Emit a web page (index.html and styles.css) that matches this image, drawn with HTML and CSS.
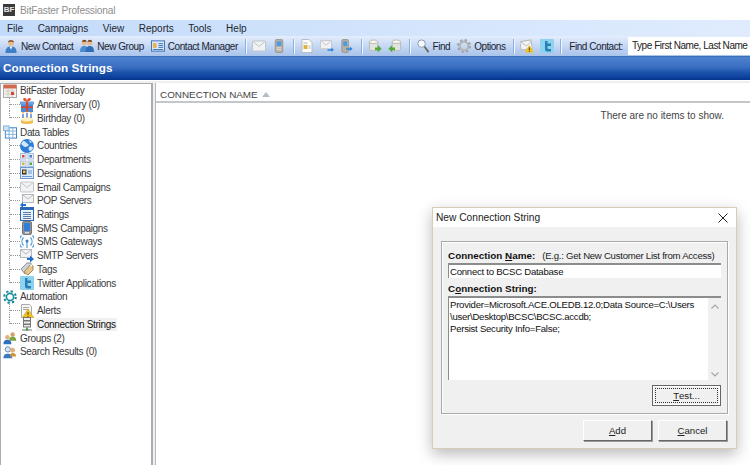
FILE: index.html
```html
<!DOCTYPE html>
<html lang="en">
<head>
<meta charset="utf-8">
<title>BitFaster Professional</title>
<link rel="stylesheet" href="styles.css">
</head>
<body>
<svg class="defs" width="0" height="0" aria-hidden="true">
  <symbol id="i-person" viewBox="0 0 14 15"><circle cx="7" cy="4" r="3.2" fill="#e9b98d"/><path d="M3.800 3.500C4 .6 10 .6 10.200 3.500 8.500 2.500 5.500 2.500 3.800 3.500z" fill="#5b3a22"/><path d="M1 15c0-5 2-7 6-7s6 2 6 7z" fill="#3f7fc6"/><path d="M5.500 8h3L7 11.500z" fill="#fff"/></symbol>
  <symbol id="i-group" viewBox="0 0 15 15"><circle cx="4.500" cy="4" r="2.800" fill="#e9b98d"/><circle cx="10.500" cy="4" r="2.800" fill="#e9b98d"/><path d="M2 3c.5-3 5-3 5 0zM8 3c.5-3 5-3 5 0z" fill="#6b4526"/><path d="M0 14c0-5 2-6.500 4.500-6.500S9 9 9 14z" fill="#4d8bd0"/><path d="M6 14c0-5 2-6.500 4.500-6.500S15 9 15 14z" fill="#2f6db5"/></symbol>
  <symbol id="i-manager" viewBox="0 0 15 14"><rect x=".5" y="1.500" width="14" height="11" fill="#d9e8fa" stroke="#3a6eb0"/><rect x="2" y="4" width="4" height="5" fill="#e8b04c"/><path d="M8 4.500h5M8 6.500h5M8 8.500h5M2 10.800h11" stroke="#3a6eb0"/></symbol>
  <symbol id="i-mail" viewBox="0 0 14 11"><rect x=".5" y=".5" width="13" height="10" rx="1" fill="#f1f2f3" stroke="#c2c5c8"/><path d="M1 1l6 5 6-5" fill="none" stroke="#c2c5c8"/></symbol>
  <symbol id="i-phone" viewBox="0 0 9 15"><rect x=".5" y=".5" width="8" height="14" rx="1.500" fill="#b4b0a6" stroke="#9a968c"/><rect x="2" y="2.500" width="5" height="5" fill="#4d9be0"/><path d="M2 9.500h5M2 11.500h5" stroke="#e4e2dc"/></symbol>
  <symbol id="i-doc" viewBox="0 0 11 14"><path d="M.5.500h7l3 3v10H.500z" fill="#fdfdf8" stroke="#b9bcc0"/><rect x="2" y="6" width="4" height="4" fill="#e3b23c"/><path d="M7 7h2M7 9h2M2 4h4" stroke="#9fb6d0"/></symbol>
  <symbol id="i-mailgo" viewBox="0 0 15 13"><rect x=".5" y=".5" width="12" height="9" rx="1" fill="#f1f2f3" stroke="#c2c5c8"/><path d="M1 1l5.500 4.500L12 1" fill="none" stroke="#c2c5c8"/><path d="M8 10h4V8l3 2.500-3 2.500v-1.500H8z" fill="#2f86d8"/></symbol>
  <symbol id="i-phonego" viewBox="0 0 12 15"><rect x=".5" y=".5" width="7" height="14" rx="1.500" fill="#b4b0a6" stroke="#9a968c"/><rect x="2" y="2.500" width="4" height="5" fill="#4d9be0"/><path d="M5 10h4V8l3 2.500-3 2.500v-1.500H5z" fill="#2f86d8"/></symbol>
  <symbol id="i-dbout" viewBox="0 0 14 15"><path d="M1 3v8c0 2 9 2 9 0V3z" fill="#e4e4de" stroke="#b8b8b2"/><ellipse cx="5.500" cy="3" rx="4.500" ry="2" fill="#f6f6f2" stroke="#b8b8b2"/><path d="M7 9h3V6.500l4 4-4 4V12H7z" fill="#55a83a"/></symbol>
  <symbol id="i-dbin" viewBox="0 0 14 15"><path d="M4 3v8c0 2 9 2 9 0V3z" fill="#e4e4de" stroke="#b8b8b2"/><ellipse cx="8.500" cy="3" rx="4.500" ry="2" fill="#f6f6f2" stroke="#b8b8b2"/><path d="M7 9H4V6.500l-4 4 4 4V12h3z" fill="#55a83a"/></symbol>
  <symbol id="i-find" viewBox="0 0 13 15"><circle cx="5" cy="5" r="4" fill="#f5f8fc" stroke="#8d98a5"/><path d="M8 8l4.500 6" stroke="#6d6a66" stroke-width="2"/></symbol>
  <symbol id="i-gear" viewBox="0 0 15 15"><circle cx="7.500" cy="7.500" r="4.600" fill="none" stroke="#b4b7ba" stroke-width="2.400"/><circle cx="7.500" cy="7.500" r="6.500" fill="none" stroke="#a0a3a7" stroke-width="2" stroke-dasharray="2.600 2.500"/></symbol>
  <symbol id="i-mailwarn" viewBox="0 0 15 14"><rect x=".5" y="1.500" width="12" height="9" fill="#f4f5f3" stroke="#b5b9bd" transform="rotate(-10 6 6)"/><path d="M1 3l6 4 5-5" fill="none" stroke="#b5b9bd"/><path d="M10 6l5 8H5z" fill="#f2c21a"/><path d="M10 8.500v3M10 12.200v1" stroke="#333"/></symbol>
  <symbol id="i-twitter" viewBox="0 0 14 14"><rect width="14" height="14" rx="1" fill="#8ed3ee"/><path d="M5 2h2.500v2.500H11v2.500H7.500v2c0 1 1 1 3.500 1V12.500H7C5.500 12.500 5 11.500 5 10z" fill="#2b7fb8"/></symbol>
  <symbol id="i-today" viewBox="0 0 14 14"><rect x=".5" y="1.500" width="13" height="12" fill="#f4f1ee" stroke="#aaa"/><rect x=".5" y=".5" width="13" height="4" fill="#cf6a50"/><path d="M2 7h10M2 10h10M5 5v8M9 5v8" stroke="#cfc8c2"/><rect x="8" y="8" width="3" height="3" fill="#d24a2a"/></symbol>
  <symbol id="i-gift" viewBox="0 0 14 14"><rect x="1" y="5" width="12" height="9" fill="#4c8ad2"/><rect x="0" y="3.500" width="14" height="3" fill="#6fa3e0"/><rect x="6" y="3.500" width="2" height="10.500" fill="#d8452a"/><rect x="1" y="8.500" width="12" height="1.500" fill="#d8452a"/><path d="M7 3.500C3 3.500 2 0 4.500 0S7 3.500 7 3.500C7 3.500 7 0 9.500 0S11 3.500 7 3.500z" fill="#e0502e"/></symbol>
  <symbol id="i-cake" viewBox="0 0 14 14"><path d="M1 8v3.500C1 13.500 13 13.500 13 11.500V8z" fill="#f0bd50"/><ellipse cx="7" cy="8" rx="6" ry="2.600" fill="#fdf2c8"/><path d="M3 7V3M7 6.500V2M11 7V3" stroke="#4a7fd0" stroke-width="1.400"/><path d="M3 1v1.500M7 0v1.500M11 1v1.500" stroke="#ee8a22" stroke-width="1.200"/></symbol>
  <symbol id="i-table" viewBox="0 0 15 14"><rect x="2.500" y="2.500" width="12" height="11" fill="#fff" stroke="#2f7dc1"/><path d="M2.500 6h12M2.500 9.500h12M6.500 2.500v11M10.500 2.500v11" stroke="#7fb2dc"/><rect x=".5" y=".5" width="6" height="5" fill="#cfe3f5" stroke="#7fb2dc"/></symbol>
  <symbol id="i-globe" viewBox="0 0 14 14"><circle cx="7" cy="7" r="7" fill="#2f7bd8"/><path d="M3 2c3 0 3 2 5 3s-1 3-3 3-3-3-4-3zM9 8c2-1 4 0 4 1s-2 3-3 3-2-3-1-4zM9 1l3 2-2 1z" fill="#cfe8fb"/></symbol>
  <symbol id="i-dept" viewBox="0 0 14 14"><rect x=".5" y=".5" width="5.500" height="5.500" fill="#e7eff9" stroke="#a8c0de"/><rect x="8" y=".5" width="5.500" height="5.500" fill="#e7eff9" stroke="#a8c0de"/><rect x=".5" y="8" width="5.500" height="5.500" fill="#e7eff9" stroke="#a8c0de"/><rect x="8" y="8" width="5.500" height="5.500" fill="#e7eff9" stroke="#a8c0de"/><rect x="2" y="2" width="2.500" height="2.500" fill="#d94c3d"/><rect x="9.500" y="2" width="2.500" height="2.500" fill="#4a7fd0"/><rect x="2" y="9.500" width="2.500" height="2.500" fill="#e0b32f"/><rect x="9.500" y="9.500" width="2.500" height="2.500" fill="#58a83f"/></symbol>
  <symbol id="i-desig" viewBox="0 0 14 14"><rect x=".5" y="1.500" width="13" height="11" fill="#dceafa" stroke="#6f9ad0"/><rect x="2" y="3.500" width="4.500" height="5" fill="#333"/><rect x="3" y="4.500" width="2.500" height="2.500" fill="#f2c45a"/><path d="M8 5h4M8 7h4M2 10.500h10" stroke="#6f9ad0"/></symbol>
  <symbol id="i-pop" viewBox="0 0 14 14"><rect x="2.500" y=".5" width="11" height="8" fill="#f2f3f4" stroke="#b5b9bd"/><path d="M3 1l5 4 5-4" fill="none" stroke="#b5b9bd"/><path d="M6 10H3V8L0 11l3 3v-2h3z" fill="#1f6fd0"/></symbol>
  <symbol id="i-ratings" viewBox="0 0 14 14"><rect x=".5" y=".5" width="13" height="13" fill="#e9f1fb" stroke="#2c68b3"/><rect x="1" y="1" width="12" height="2" fill="#2c68b3"/><path d="M3 5.500h8M3 7.500h8M3 9.500h8M3 11.500h8" stroke="#5a7da8"/></symbol>
  <symbol id="i-smsc" viewBox="0 0 10 14"><rect x=".5" y=".5" width="9" height="13" rx="1.500" fill="#8f949a" stroke="#777"/><rect x="2" y="2" width="6" height="8" fill="#2f7fd8"/><rect x="3" y="11" width="4" height="1.500" fill="#ddd"/></symbol>
  <symbol id="i-gateway" viewBox="0 0 14 14"><path d="M3.500 2.500a6 6 0 0 0 0 8M1.500.5a9 9 0 0 0 0 12M10.500 2.500a6 6 0 0 1 0 8M12.500.5a9 9 0 0 1 0 12" fill="none" stroke="#4a9bdc" stroke-width="1.200"/><circle cx="7" cy="6" r="1.500" fill="#3a7fc2"/><path d="M7 7v6" stroke="#3a7fc2"/></symbol>
  <symbol id="i-smtp" viewBox="0 0 14 14"><rect x=".5" y=".5" width="11" height="8" fill="#f2f3f4" stroke="#b5b9bd"/><path d="M1 1l5 4 5-4" fill="none" stroke="#b5b9bd"/><path d="M7 9h3V6.500l4 3.500-4 3.500V11H7z" fill="#1f6fd0"/></symbol>
  <symbol id="i-tags" viewBox="0 0 14 14"><path d="M1 7l6-6h4v4l-6 7z" fill="#cfd4da" stroke="#8f949a"/><path d="M4 10l6-7 3 1v4l-5 5z" fill="#e8c68a" stroke="#a08a60"/><circle cx="11" cy="3.500" r="1" fill="#fff"/></symbol>
  <symbol id="i-auto" viewBox="0 0 14 14"><circle cx="7" cy="7" r="3.600" fill="none" stroke="#14899a" stroke-width="1.600"/><circle cx="7" cy="7" r="5.800" fill="none" stroke="#14899a" stroke-width="2" stroke-dasharray="2.300 2.250"/></symbol>
  <symbol id="i-alert" viewBox="0 0 14 14"><path d="M1.500.5h8l2 2v11h-10z" fill="#f7f7f4" stroke="#aaa"/><path d="M3 3.500h6M3 5.500h6" stroke="#aaa"/><path d="M8 5l6 9H2z" fill="#f3c31c" stroke="#c89a10" stroke-width=".5"/><path d="M8 8v3M8 12v1" stroke="#444"/></symbol>
  <symbol id="i-server" viewBox="0 0 14 14"><rect x="3.500" y=".5" width="7" height="3" fill="#eeeeea" stroke="#777"/><rect x="3.500" y="4" width="7" height="3" fill="#eeeeea" stroke="#777"/><rect x="3.500" y="7.500" width="7" height="2.500" fill="#eeeeea" stroke="#777"/><path d="M7 10v2M2 13h10" stroke="#777"/><circle cx="7" cy="12.500" r="1.300" fill="#3f9a3a"/></symbol>
  <symbol id="i-groups" viewBox="0 0 16 14"><circle cx="11" cy="3" r="2.500" fill="#d9a066"/><path d="M7 10c0-4 2-4.500 4-4.500s4 .5 4 4.500z" fill="#7aa63c"/><circle cx="5" cy="6" r="2.500" fill="#e2b07e"/><path d="M.5 14c0-4 2-5 4.500-5s4.500 1 4.500 5z" fill="#2c6fc0"/></symbol>
  <symbol id="i-search" viewBox="0 0 16 14"><circle cx="5.500" cy="4" r="3" fill="#dbe6f2" stroke="#5a7ea8"/><path d="M.5 14c0-4 2-5 5-5s5 1 5 5z" fill="#3c78c0"/><circle cx="11" cy="5" r="2.800" fill="#e2b07e"/><path d="M8 12c0-3 1-4 3-4s4 1 4 4z" fill="#c9953f"/></symbol>
</svg>

<header class="titlebar">
  <span class="app-logo">BF</span>
  <span class="app-title">BitFaster Professional</span>
</header>

<nav class="menubar">
  <span class="menu-item">File</span>
  <span class="menu-item">Campaigns</span>
  <span class="menu-item">View</span>
  <span class="menu-item">Reports</span>
  <span class="menu-item">Tools</span>
  <span class="menu-item">Help</span>
</nav>

<div class="toolbar">
  <span class="tool"><svg class="ic14"><use href="#i-person"/></svg>New Contact</span>
  <span class="tool"><svg class="ic14"><use href="#i-group"/></svg>New Group</span>
  <span class="tool"><svg class="ic14"><use href="#i-manager"/></svg>Contact Manager</span>
  <span class="sep"></span>
  <span class="tool tool-icon"><svg class="ic14"><use href="#i-mail"/></svg></span>
  <span class="tool tool-icon"><svg class="ic14"><use href="#i-phone"/></svg></span>
  <span class="sep"></span>
  <span class="tool tool-icon"><svg class="ic14"><use href="#i-doc"/></svg></span>
  <span class="tool tool-icon"><svg class="ic14"><use href="#i-mailgo"/></svg></span>
  <span class="tool tool-icon"><svg class="ic14"><use href="#i-phonego"/></svg></span>
  <span class="sep"></span>
  <span class="tool tool-icon"><svg class="ic14"><use href="#i-dbout"/></svg></span>
  <span class="tool tool-icon"><svg class="ic14"><use href="#i-dbin"/></svg></span>
  <span class="sep"></span>
  <span class="tool"><svg class="ic14"><use href="#i-find"/></svg>Find</span>
  <span class="tool"><svg class="ic14"><use href="#i-gear"/></svg>Options</span>
  <span class="sep"></span>
  <span class="tool tool-icon"><svg class="ic14"><use href="#i-mailwarn"/></svg></span>
  <span class="tool tool-icon"><svg class="ic14"><use href="#i-twitter"/></svg></span>
  <span class="sep"></span>
  <span class="find-label">Find Contact:</span>
  <span class="find-box">Type First Name, Last Name or Email</span>
</div>

<div class="banner">Connection Strings</div>

<main class="workspace">
  <aside class="tree">
    <div class="row"><svg class="ic14"><use href="#i-today"/></svg><span class="label">BitFaster Today</span></div>
    <div class="row"><span class="conn"></span><svg class="ic14"><use href="#i-gift"/></svg><span class="label">Anniversary (0)</span></div>
    <div class="row"><span class="conn conn-last"></span><svg class="ic14"><use href="#i-cake"/></svg><span class="label">Birthday (0)</span></div>
    <div class="row"><svg class="ic14"><use href="#i-table"/></svg><span class="label">Data Tables</span></div>
    <div class="row"><span class="conn"></span><svg class="ic14"><use href="#i-globe"/></svg><span class="label">Countries</span></div>
    <div class="row"><span class="conn"></span><svg class="ic14"><use href="#i-dept"/></svg><span class="label">Departments</span></div>
    <div class="row"><span class="conn"></span><svg class="ic14"><use href="#i-desig"/></svg><span class="label">Designations</span></div>
    <div class="row"><span class="conn"></span><svg class="ic14"><use href="#i-mail"/></svg><span class="label">Email Campaigns</span></div>
    <div class="row"><span class="conn"></span><svg class="ic14"><use href="#i-pop"/></svg><span class="label">POP Servers</span></div>
    <div class="row"><span class="conn"></span><svg class="ic14"><use href="#i-ratings"/></svg><span class="label">Ratings</span></div>
    <div class="row"><span class="conn"></span><svg class="ic14"><use href="#i-smsc"/></svg><span class="label">SMS Campaigns</span></div>
    <div class="row"><span class="conn"></span><svg class="ic14"><use href="#i-gateway"/></svg><span class="label">SMS Gateways</span></div>
    <div class="row"><span class="conn"></span><svg class="ic14"><use href="#i-smtp"/></svg><span class="label">SMTP Servers</span></div>
    <div class="row"><span class="conn"></span><svg class="ic14"><use href="#i-tags"/></svg><span class="label">Tags</span></div>
    <div class="row"><span class="conn conn-last"></span><svg class="ic14"><use href="#i-twitter"/></svg><span class="label">Twitter Applications</span></div>
    <div class="row"><svg class="ic14"><use href="#i-auto"/></svg><span class="label">Automation</span></div>
    <div class="row"><span class="conn"></span><svg class="ic14"><use href="#i-alert"/></svg><span class="label">Alerts</span></div>
    <div class="row"><span class="conn conn-last"></span><svg class="ic14"><use href="#i-server"/></svg><span class="label label-selected">Connection Strings</span></div>
    <div class="row"><svg class="ic14"><use href="#i-groups"/></svg><span class="label">Groups (2)</span></div>
    <div class="row"><svg class="ic14"><use href="#i-search"/></svg><span class="label">Search Results (0)</span></div>
  </aside>
  <section class="list">
    <div class="list-head">CONNECTION NAME<span class="sort-arrow"></span></div>
    <p class="list-empty">There are no items to show.</p>
  </section>
</main>

<div class="dialog">
  <div class="dialog-title">
    <span>New Connection String</span>
    <svg class="close" viewBox="0 0 10 10"><path d="M.5.500l9 9M9.500.500l-9 9" stroke="#222" fill="none"/></svg>
  </div>
  <div class="dialog-body">
    <div class="group">
      <div class="field-label"><b>Connection <u>N</u>ame:</b><span class="hint">(E.g.: Get New Customer List from Access)</span></div>
      <div class="sunken single">Connect to BCSC Database</div>
      <div class="field-label field-label-2"><b>C<u>o</u>nnection String:</b></div>
      <div class="sunken multi">
        <div class="multi-text">Provider=Microsoft.ACE.OLEDB.12.0;Data Source=C:\Users<br>\user\Desktop\BCSC\BCSC.accdb;<br>Persist Security Info=False;</div>
        <div class="scroll">
          <svg class="chev" viewBox="0 0 8 5"><path d="M.5 4.500L4 1l3.500 3.500" fill="none" stroke="#a6a6a6" stroke-width="1.200"/></svg>
          <svg class="chev" viewBox="0 0 8 5"><path d="M.5.500L4 4 7.500.500" fill="none" stroke="#a6a6a6" stroke-width="1.200"/></svg>
        </div>
      </div>
      <div class="btn-row"><button class="btn btn-focus" type="button"><span class="focus-ring"><u>T</u>est...</span></button></div>
    </div>
    <div class="dialog-actions">
      <button class="btn" type="button"><u>A</u>dd</button>
      <button class="btn" type="button"><u>C</u>ancel</button>
    </div>
  </div>
</div>
</body>
</html>
```

FILE: styles.css
```css
* { box-sizing: border-box; }
html, body { margin: 0; height: 100%; }
body {
  width: 750px;
  height: 465px;
  overflow: hidden;
  background: #f0f0f0;
  font-family: "Liberation Sans", Arial, sans-serif;
  font-size: 10px;
  letter-spacing: -.33px;
  color: #222;
  position: relative;
  display: flex;
  flex-direction: column;
}
.defs { position: absolute; }
.ic14 { width: 14px; height: 14px; flex: none; display: block; }

.titlebar { height: 20px; flex: none; background: #fff; display: flex; align-items: center; padding-left: 3px; gap: 5px; }
.app-logo {
  width: 12px; height: 12px; background: #3a3a3a; color: #e8e8e8;
  font-size: 8px; font-weight: bold; line-height: 12px; text-align: center; letter-spacing: 0;
}
.app-title { color: #8f8f8f; font-size: 10.2px; letter-spacing: -.2px; }

.menubar {
  height: 16px; flex: none; display: flex; align-items: center; padding-left: 7px;
  background: linear-gradient(90deg, #c3dbfa, #d2e4fc 50%, #e0ecfe);
  font-size: 10px; letter-spacing: 0; color: #1c2530;
}
.menu-item { margin-right: 14.5px; }

.toolbar {
  height: 21px; flex: none; display: flex; align-items: center; padding-left: 4px; overflow: hidden;
  background: linear-gradient(#e4eefd, #c8daf5 45%, #a9c3ea);
  border-bottom: 1px solid #3e6fb9;
  color: #1a2430;
  letter-spacing: -.45px;
}
.tool { display: flex; align-items: center; gap: 3px; margin-right: 7px; white-space: nowrap; }
.tool-icon { margin-right: 6.4px; }
.sep { width: 1px; height: 15px; background: #8fb0de; box-shadow: 1px 0 0 #f0f6ff; margin-right: 6px; flex: none; }
.find-label { margin-left: 2px; margin-right: 5px; white-space: nowrap; }
.find-box {
  flex: 1; align-self: flex-start; margin-top: 1px; height: 18px; line-height: 17px;
  background: #fff; padding-left: 4px; white-space: nowrap; overflow: hidden; color: #222;
}

.banner {
  height: 23px; flex: none; padding: 2px 0 0 3px;
  background: linear-gradient(#4f82cf, #3a6fc2 45%, #1c54ab 70%, #063a98);
  color: #fff; font-size: 11.7px; font-weight: bold; line-height: 18px; letter-spacing: .1px;
  border-bottom: 1px solid #08358c;
}

.workspace { flex: 1; display: flex; gap: 2px; padding-top: 2px; min-height: 0; border-top: 1px solid #fff; }
.tree {
  width: 153px; flex: none; background: #fff;
  border: 1px solid #a8adb2; border-bottom: 0; border-right-width: 2px;
  padding: 0 0 0 2px;
}
.row { height: 13.74px; display: flex; align-items: center; color: #3a3a3a; }
.row > .ic14 { margin-right: 2px; }
.conn {
  width: 11px; margin-left: 6px; align-self: stretch; flex: none;
  border-left: 1px dotted #999; display: flex; align-items: center;
}
.conn::after { content: ""; flex: 1; border-top: 1px dotted #999; }
.conn-last { align-self: flex-start; height: 50%; align-items: flex-end; }
.label { padding: 0 1px; line-height: 13px; white-space: nowrap; }
.label-selected { background: #f0f0f0; color: #111; }

.list { flex: 1; background: #fff; border-left: 1px solid #b4b8bc; min-width: 0; }
.list-head {
  height: 20px; padding: 4px 0 0 4px; border-bottom: 2px solid #c3c7ca;
  display: flex; align-items: center; color: #444; font-size: 9.9px; letter-spacing: 0;
}
.sort-arrow { width: 0; height: 0; margin-left: 4px; border: 4px solid transparent; border-top: 0; border-bottom: 5px solid #b7bcc4; }
.list-empty { margin: 6px 26px 0 0; text-align: right; color: #444; font-size: 10px; letter-spacing: 0; line-height: 13px; }

.dialog {
  position: absolute; left: 432px; top: 207px; width: 305px; height: 242px;
  background: #f0f0f0; border: 1px solid #d8ccb6;
  box-shadow: 0 5px 14px rgba(0, 0, 0, .28);
  display: flex; flex-direction: column;
}
.dialog-title {
  height: 19px; flex: none; background: #fff; display: flex; align-items: center;
  justify-content: space-between; padding: 0 8px 0 3px; color: #222; font-size: 10.2px; letter-spacing: 0;
}
.close { width: 10px; height: 10px; }
.dialog-body { flex: 1; padding: 14px 9px 0 8px; display: flex; flex-direction: column; color: #111; letter-spacing: -.26px; font-size: 9.6px; }
.group {
  height: 173px; width: 287px; padding: 6px 6px 0 6px; flex: none;
  border: 1px solid #a9a9a9;
  box-shadow: inset 1px 1px 0 #fff, 1px 1px 0 #fff;
}
.field-label { height: 15px; line-height: 15px; display: flex; gap: 7px; font-size: 9.9px; letter-spacing: 0; white-space: nowrap; }
.hint { font-size: 9.6px; letter-spacing: -.26px; color: #222; }
.field-label-2 { margin-top: 3px; }
.sunken { background: #fff; border-top: 2px solid #8c8c8c; border-left: 1px solid #8c8c8c; }
.single { height: 15px; line-height: 13px; padding-left: 1px; }
.multi { height: 84px; display: flex; }
.multi-text { flex: 1; padding: 1px 0 0 1px; line-height: 12px; white-space: nowrap; }
.scroll { width: 13px; flex: none; background: #f0f0f0; display: flex; flex-direction: column; justify-content: space-between; align-items: center; padding: 6px 0 3px; }
.chev { width: 8px; height: 5px; }
.btn-row { display: flex; justify-content: flex-end; margin-top: 5px; }
.btn {
  width: 69px; height: 21px; padding: 0; background: #f0f0f0; color: #222;
  font: 9.6px "Liberation Sans", Arial, sans-serif;
  border: 1px solid #fff; border-right-color: #666; border-bottom-color: #666;
  box-shadow: 1px 1px 0 #999;
}
.btn-focus { border: 1px solid #666; padding: 2px; display: flex; box-shadow: none; outline: 1px solid #fff; outline-offset: -2px; }
.focus-ring { flex: 1; border: 1px dotted #333; display: flex; align-items: center; justify-content: center; }
.dialog-actions { display: flex; justify-content: flex-end; gap: 6px; margin-top: 6px; }
```
